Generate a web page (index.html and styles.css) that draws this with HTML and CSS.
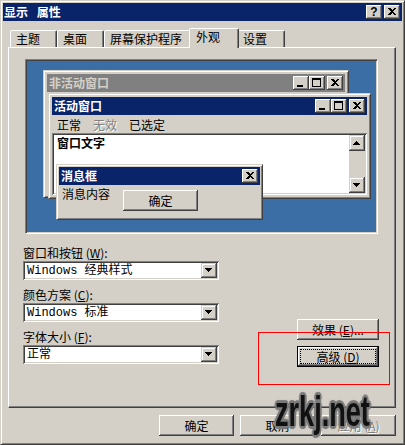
FILE: index.html
```html
<!DOCTYPE html>
<html lang="zh-CN">
<head>
<meta charset="utf-8">
<title>显示 属性</title>
<link rel="stylesheet" href="styles.css">
</head>
<body>
<div class="window">
  <div class="titlebar">
    <span class="title">显示 属性</span>
    <div class="cbtns">
      <span class="cb help">?</span>
      <span class="cb close"><svg width="16" height="14" viewBox="0 0 16 14"><path d="M4 3h2l2 2 2-2h2l-3 3.5 3 3.5h-2l-2-2-2 2H4l3-3.5z"/></svg></span>
    </div>
  </div>

  <div class="tabs">
    <div class="tab w47">主题</div>
    <div class="tab w47">桌面</div>
    <div class="tab w87">屏幕保护程序</div>
    <div class="tab sel">外观</div>
    <div class="tab w48">设置</div>
  </div>

  <div class="panel">
    <div class="preview">
      <div class="desktop">
        <div class="pwin inactive">
          <div class="cap inact">
            <span class="captext">非活动窗口</span>
            <div class="cbtns">
              <span class="cb"><svg width="16" height="14" viewBox="0 0 16 14"><path d="M4 9h6v2H4z"/></svg></span>
              <span class="cb"><svg width="16" height="14" viewBox="0 0 16 14"><path fill-rule="evenodd" d="M3 2h9v9H3z M4 4v6h7V4z"/></svg></span>
              <span class="cb close"><svg width="16" height="14" viewBox="0 0 16 14"><path d="M4 3h2l2 2 2-2h2l-3 3.5 3 3.5h-2l-2-2-2 2H4l3-3.5z"/></svg></span>
            </div>
          </div>
        </div>

        <div class="pwin active">
          <div class="cap act">
            <span class="captext">活动窗口</span>
            <div class="cbtns">
              <span class="cb"><svg width="16" height="14" viewBox="0 0 16 14"><path d="M4 9h6v2H4z"/></svg></span>
              <span class="cb"><svg width="16" height="14" viewBox="0 0 16 14"><path fill-rule="evenodd" d="M3 2h9v9H3z M4 4v6h7V4z"/></svg></span>
              <span class="cb close"><svg width="16" height="14" viewBox="0 0 16 14"><path d="M4 3h2l2 2 2-2h2l-3 3.5 3 3.5h-2l-2-2-2 2H4l3-3.5z"/></svg></span>
            </div>
          </div>
          <div class="menu">
            <span>正常</span>
            <span class="dis">无效</span>
            <span>已选定</span>
          </div>
          <div class="textbox">
            <div class="tbtext">窗口文字</div>
            <div class="vscroll">
              <span class="sbtn"><svg width="16" height="16" viewBox="0 0 16 16"><path d="M7 6h1v1H7z M6 7h3v1H6z M5 8h5v1H5z M4 9h7v1H4z"/></svg></span>
              <span class="track"></span>
              <span class="sbtn"><svg width="16" height="16" viewBox="0 0 16 16"><path d="M4 6h7v1H4z M5 7h5v1H5z M6 8h3v1H6z M7 9h1v1H7z"/></svg></span>
            </div>
          </div>
        </div>

        <div class="pwin msg">
          <div class="cap act">
            <span class="captext">消息框</span>
            <div class="cbtns">
              <span class="cb close"><svg width="16" height="14" viewBox="0 0 16 14"><path d="M4 3h2l2 2 2-2h2l-3 3.5 3 3.5h-2l-2-2-2 2H4l3-3.5z"/></svg></span>
            </div>
          </div>
          <div class="msgbody">
            <span class="msgtext">消息内容</span>
            <span class="btn okbtn">确定</span>
          </div>
        </div>
      </div>
    </div>

    <div class="lower">
      <div class="fields">
        <div class="field">
          <div class="label">窗口和按钮 (<u>W</u>):</div>
          <div class="combo">
            <span class="cval">Windows 经典样式</span>
            <span class="cdrop"><svg width="16" height="15" viewBox="0 0 16 15"><path d="M4 5h7v1H4z M5 6h5v1H5z M6 7h3v1H6z M7 8h1v1H7z"/></svg></span>
          </div>
        </div>
        <div class="field">
          <div class="label">颜色方案 (<u>C</u>):</div>
          <div class="combo">
            <span class="cval">Windows 标准</span>
            <span class="cdrop"><svg width="16" height="15" viewBox="0 0 16 15"><path d="M4 5h7v1H4z M5 6h5v1H5z M6 7h3v1H6z M7 8h1v1H7z"/></svg></span>
          </div>
        </div>
        <div class="field">
          <div class="label">字体大小 (<u>F</u>):</div>
          <div class="combo">
            <span class="cval">正常</span>
            <span class="cdrop"><svg width="16" height="15" viewBox="0 0 16 15"><path d="M4 5h7v1H4z M5 6h5v1H5z M6 7h3v1H6z M7 8h1v1H7z"/></svg></span>
          </div>
        </div>
      </div>
      <div class="side">
        <span class="btn wide">效果 (<u>E</u>)...</span>
        <span class="btn wide def"><span class="focus">高级 (<u>D</u>)</span></span>
      </div>
    </div>
  </div>

  <div class="footer">
    <span class="btn">确定</span>
    <span class="btn">取消</span>
    <span class="btn dis">应用 (<u>A</u>)</span>
  </div>

  <div class="redbox"></div>
  <div class="watermark">zrkj.net</div>
</div>
</body>
</html>
```

FILE: styles.css
```css
* { box-sizing: border-box; }

body {
  margin: 0;
  background: #d4d0c8;
  font: 12px/14px "Noto Sans CJK SC", "Noto Sans", sans-serif;
  color: #000;
}

svg { display: block; shape-rendering: crispEdges; fill: #000; }

.window {
  position: relative;
  width: 405px;
  height: 445px;
  background: #d4d0c8;
  border: 1px solid;
  border-color: #d4d0c8 #404040 #404040 #d4d0c8;
  box-shadow: inset 1px 1px #fff, inset -1px -1px #808080;
  padding: 2px;
  display: flex;
  flex-direction: column;
}

/* ---------- title bar ---------- */
.titlebar {
  height: 18px;
  flex: none;
  background: #0a246a;
  color: #fff;
  display: flex;
  align-items: center;
  padding: 0 2px 0 1px;
  font-weight: bold;
}
.title { flex: 1; word-spacing: 6px; }

.cbtns { display: flex; margin-left: auto; }
.cb {
  width: 16px;
  height: 14px;
  background: #d4d0c8;
  box-shadow: inset -1px -1px #404040, inset 1px 1px #fff, inset -2px -2px #808080;
  display: flex;
  align-items: center;
  justify-content: center;
}
.cb.close { margin-left: 2px; }
.cb.help {
  color: #000;
  font: bold 12px/14px "Liberation Sans", Arial, sans-serif;
}

/* ---------- tabs ---------- */
.tabs {
  display: flex;
  align-items: flex-end;
  height: 20px;
  margin: 7px 0 -1px 7px;
  position: relative;
  z-index: 1;
  flex: none;
}
.tab {
  height: 17px;
  margin-bottom: 1px;
  border: 1px solid;
  border-bottom: 0;
  border-color: #fff #404040 transparent #fff;
  box-shadow: inset -1px 0 #808080;
  border-radius: 2px 2px 0 0;
  padding: 1px 0 0 5px;
  background: #d4d0c8;
  white-space: nowrap;
}
.w47 { width: 47px; }
.w48 { width: 48px; }
.w87 { width: 87px; }
.tab.sel {
  width: 50px;
  height: 20px;
  margin: 0 -2px;
  padding: 1px 0 0 6px;
  position: relative;
  z-index: 2;
}

/* ---------- panel ---------- */
.panel {
  margin: 0 6px 0 5px;
  height: 361px;
  flex: none;
  border: 1px solid;
  border-color: #fff #404040 #404040 #fff;
  box-shadow: inset -1px -1px #808080;
  display: flex;
  flex-direction: column;
}

.preview {
  margin: 11px 0 0 16px;
  width: 353px;
  height: 175px;
  border: 1px solid;
  border-color: #808080 #fff #fff #808080;
  box-shadow: inset 1px 1px #404040, inset -1px -1px #d4d0c8;
  padding: 1px;
}
.desktop {
  position: relative;
  width: 100%;
  height: 100%;
  background: #3a6ea5;
}

.pwin {
  position: absolute;
  background: #d4d0c8;
  border: 1px solid;
  border-color: #d4d0c8 #404040 #404040 #d4d0c8;
  box-shadow: inset 1px 1px #fff, inset -1px -1px #808080;
  padding: 3px;
  display: flex;
  flex-direction: column;
}
.inactive { left: 16px; top: 9px; width: 306px; height: 128px; }
.active { left: 21px; top: 32px; width: 323px; height: 106px; }
.msg { left: 29px; top: 103px; width: 207px; height: 56px; padding: 2px; }

.cap {
  height: 18px;
  flex: none;
  display: flex;
  align-items: center;
  padding: 0 2px;
  font-weight: bold;
  white-space: nowrap;
}
.cap.act { background: #0a246a; color: #fff; }
.cap.inact { background: #808080; color: #d4d0c8; }

.menu {
  height: 18px;
  flex: none;
  display: flex;
  gap: 12px;
  padding: 3px 0 0 5px;
}
.dis { color: #808080; text-shadow: 1px 1px #fff; }

.textbox {
  flex: 1;
  display: flex;
  background: #fff;
  padding: 2px;
  box-shadow: inset 1px 1px #808080, inset -1px -1px #fff, inset 2px 2px #404040, inset -2px -2px #d4d0c8;
}
.tbtext { flex: 1; font-weight: bold; padding: 1px 0 0 3px; }
.vscroll { width: 16px; display: flex; flex-direction: column; }
.sbtn {
  width: 16px;
  height: 16px;
  background: #d4d0c8;
  box-shadow: inset -1px -1px #404040, inset 1px 1px #d4d0c8, inset -2px -2px #808080, inset 2px 2px #fff;
}
.track { flex: 1; background: #d4d0c8; }

.msgbody {
  flex: 1;
  display: flex;
  align-items: flex-start;
  gap: 13px;
  padding-left: 3px;
}
.msgtext { margin-top: 2px; }
.okbtn { width: 71px; height: 23px; margin-top: 5px; }

/* ---------- buttons ---------- */
.btn {
  width: 75px;
  height: 21px;
  background: #d4d0c8;
  box-shadow: inset -1px -1px #404040, inset 1px 1px #fff, inset -2px -2px #808080;
  display: flex;
  align-items: center;
  justify-content: center;
  white-space: nowrap;
}
.btn.wide { width: 82px; }
.btn.def {
  border: 1px solid #000;
  box-shadow: inset -1px -1px #404040, inset 1px 1px #fff, inset -2px -2px #808080;
  align-items: stretch;
  justify-content: stretch;
}
.focus {
  flex: 1;
  margin: 2px 2px 2px 2px;
  border: 1px dotted #000;
  display: flex;
  align-items: center;
  justify-content: center;
}

/* ---------- lower form ---------- */
.lower { display: flex; margin-top: 12px; }
.fields { margin-left: 14px; width: 196px; }
.field + .field { margin-top: 8px; }
.label { height: 14px; white-space: nowrap; }
.combo {
  margin-top: 1px;
  height: 19px;
  display: flex;
  background: #fff;
  padding: 2px;
  box-shadow: inset 1px 1px #808080, inset -1px -1px #fff, inset 2px 2px #404040, inset -2px -2px #d4d0c8;
}
.cval {
  flex: 1;
  padding: 1px 0 0 2px;
  font-family: "Liberation Mono", "Noto Sans CJK SC", monospace;
  white-space: nowrap;
}
.cdrop {
  width: 16px;
  height: 15px;
  background: #d4d0c8;
  box-shadow: inset -1px -1px #404040, inset 1px 1px #d4d0c8, inset -2px -2px #808080, inset 2px 2px #fff;
}
.side {
  margin: 73px 16px 0 auto;
  display: flex;
  flex-direction: column;
  gap: 6px;
}

/* ---------- footer ---------- */
.footer {
  display: flex;
  justify-content: flex-end;
  gap: 6px;
  margin: 7px 6px 0 0;
}

/* ---------- overlays ---------- */
.redbox {
  position: absolute;
  left: 257px;
  top: 331px;
  width: 132px;
  height: 53px;
  border: 1px solid #ff0000;
}
.watermark {
  position: absolute;
  left: 274px;
  top: 389px;
  font: bold 43px/43px "Liberation Sans", Arial, sans-serif;
  color: #111;
  transform: scaleX(0.63);
  transform-origin: 0 0;
  white-space: nowrap;
  text-shadow:
    3px 0 1px #7a7a7a, -3px 0 1px #7a7a7a, 0 3px 1px #7a7a7a, 0 -3px 1px #7a7a7a,
    2px 2px 1px #7a7a7a, -2px 2px 1px #7a7a7a, 2px -2px 1px #7a7a7a, -2px -2px 1px #7a7a7a;
}
```
